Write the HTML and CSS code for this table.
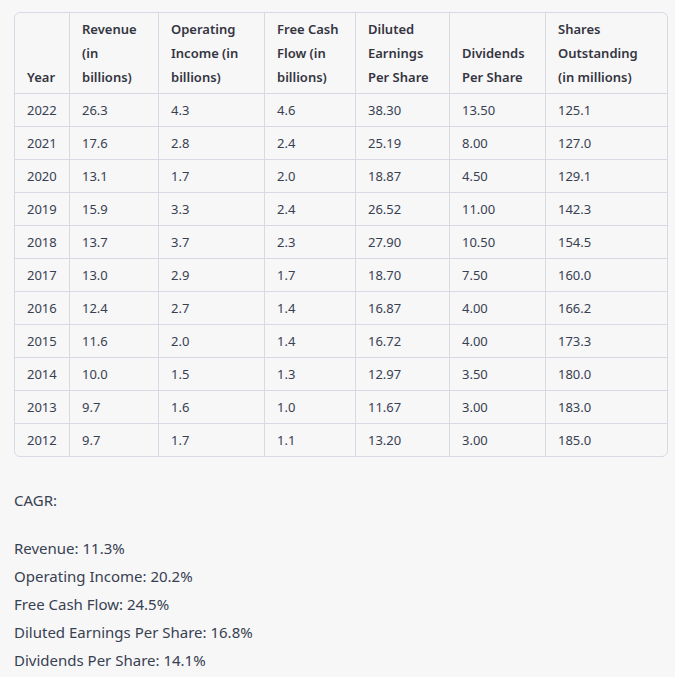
FILE: index.html
```html
<!DOCTYPE html>
<html lang="en">
<head>
<meta charset="utf-8">
<title>Financials</title>
<link rel="stylesheet" href="styles.css">
</head>
<body>
<main class="content">
  <div class="table-wrap">
    <table class="fin">
      <colgroup>
        <col class="c-year"><col class="c-rev"><col class="c-op"><col class="c-fcf"><col class="c-eps"><col class="c-div"><col class="c-sh">
      </colgroup>
      <thead>
        <tr>
          <th>Year</th>
          <th>Revenue (in billions)</th>
          <th>Operating Income (in billions)</th>
          <th>Free Cash Flow (in billions)</th>
          <th>Diluted Earnings Per Share</th>
          <th>Dividends Per Share</th>
          <th>Shares Outstanding (in millions)</th>
        </tr>
      </thead>
      <tbody>
        <tr><td>2022</td><td>26.3</td><td>4.3</td><td>4.6</td><td>38.30</td><td>13.50</td><td>125.1</td></tr>
        <tr><td>2021</td><td>17.6</td><td>2.8</td><td>2.4</td><td>25.19</td><td>8.00</td><td>127.0</td></tr>
        <tr><td>2020</td><td>13.1</td><td>1.7</td><td>2.0</td><td>18.87</td><td>4.50</td><td>129.1</td></tr>
        <tr><td>2019</td><td>15.9</td><td>3.3</td><td>2.4</td><td>26.52</td><td>11.00</td><td>142.3</td></tr>
        <tr><td>2018</td><td>13.7</td><td>3.7</td><td>2.3</td><td>27.90</td><td>10.50</td><td>154.5</td></tr>
        <tr><td>2017</td><td>13.0</td><td>2.9</td><td>1.7</td><td>18.70</td><td>7.50</td><td>160.0</td></tr>
        <tr><td>2016</td><td>12.4</td><td>2.7</td><td>1.4</td><td>16.87</td><td>4.00</td><td>166.2</td></tr>
        <tr><td>2015</td><td>11.6</td><td>2.0</td><td>1.4</td><td>16.72</td><td>4.00</td><td>173.3</td></tr>
        <tr><td>2014</td><td>10.0</td><td>1.5</td><td>1.3</td><td>12.97</td><td>3.50</td><td>180.0</td></tr>
        <tr><td>2013</td><td>9.7</td><td>1.6</td><td>1.0</td><td>11.67</td><td>3.00</td><td>183.0</td></tr>
        <tr><td>2012</td><td>9.7</td><td>1.7</td><td>1.1</td><td>13.20</td><td>3.00</td><td>185.0</td></tr>
      </tbody>
    </table>
  </div>
  <p class="para first">CAGR:</p>
  <p class="para">Revenue: 11.3%<br>Operating Income: 20.2%<br>Free Cash Flow: 24.5%<br>Diluted Earnings Per Share: 16.8%<br>Dividends Per Share: 14.1%</p>
</main>
</body>
</html>
```
FILE: styles.css
```css
html, body {
  margin: 0;
  padding: 0;
  background: #f7f7f8;
}
body {
  font-family: "Noto Sans", "Open Sans", sans-serif;
  color: #374151;
}
.content {
  padding: 12px 7px 0 14px;
}
.table-wrap {
  border: 1px solid #d9d9e3;
  border-radius: 6px;
  overflow: hidden;
}
.fin {
  width: 100%;
  table-layout: fixed;
  border-collapse: separate;
  border-spacing: 0;
  font-size: 13px;
  line-height: 24px;
}
.c-year { width: 54px; }
.c-rev { width: 89px; }
.c-op { width: 106px; }
.c-fcf { width: 91px; }
.c-eps { width: 94px; }
.c-div { width: 96px; }
.c-sh { width: 122px; }
.fin th, .fin td {
  padding: 4px 12px;
  text-align: left;
  box-sizing: border-box;
}
.fin th {
  font-weight: 600;
  vertical-align: bottom;
  color: #343541;
}
.fin th + th, .fin td + td {
  border-left: 1px solid #d9d9e3;
}
.fin td {
  border-top: 1px solid #d9d9e3;
  font-weight: 400;
}
.para {
  margin: 0;
  font-size: 15px;
  line-height: 28px;
}
.para.first {
  margin: 29px 0 20px;
}
```
